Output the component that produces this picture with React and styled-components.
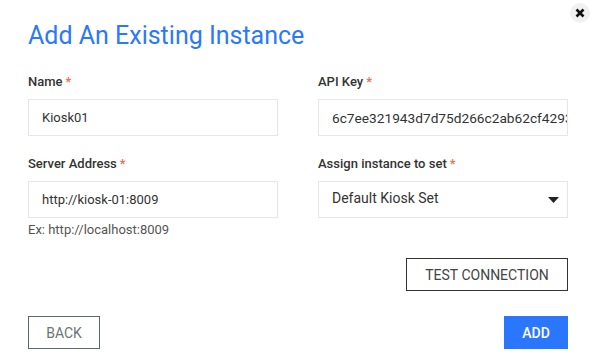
import React from "react";
import styled, { createGlobalStyle } from "styled-components";

const Global = createGlobalStyle`
  html, body { margin: 0; padding: 0; background: #fff; }
  body { font-family: Roboto, "Noto Sans", Arial, sans-serif; }
  * { box-sizing: border-box; }
`;

const Dialog = styled.div`
  position: relative;
  width: 598px;
  height: 361px;
  padding: 21px 30px 0 28px;
  background: #fff;
`;

const Close = styled.button`
  position: absolute;
  top: 3px;
  left: 570px;
  width: 20px;
  height: 20px;
  border-radius: 50%;
  border: none;
  padding: 0;
  background: #f1f1f1;
  display: flex;
  align-items: center;
  justify-content: center;
`;

const Title = styled.h1`
  margin: 0 0 24px;
  font-size: 25px;
  line-height: 29px;
  font-weight: 400;
  color: #2b78fa;
`;

const Grid = styled.div`
  display: grid;
  grid-template-columns: 250px 250px;
  column-gap: 40px;
  row-gap: 20px;
`;

const Field = styled.div`
  display: flex;
  flex-direction: column;
`;

const Label = styled.label`
  font-size: 13px;
  line-height: 16px;
  font-weight: 500;
  color: #333;
  margin-bottom: 9px;
`;

const Req = styled.span`
  color: #f06a4f;
  margin-left: 3px;
`;

const Input = styled.div`
  height: 37px;
  border: 1px solid #e6e6e6;
  padding: 0 13px;
  display: flex;
  align-items: center;
  font-size: ${(p) => p.$size || 13}px;
  color: #333;
  white-space: nowrap;
  overflow: hidden;
`;

const SelectBox = styled(Input)`
  justify-content: space-between;
  padding-bottom: 4px;
  padding-right: 8px;
`;

const Hint = styled.div`
  margin-top: 5px;
  font-size: 13px;
  line-height: 14px;
  color: #555;
`;

const TestRow = styled.div`
  display: flex;
  justify-content: flex-end;
  margin-top: 21px;
`;

const OutlineButton = styled.button`
  height: 33px;
  width: ${(p) => p.$width}px;
  padding: 0;
  background: #fff;
  border: 1px solid ${(p) => p.$border || "#333"};
  color: ${(p) => p.$color || "#444"};
  font-family: Roboto, Arial, sans-serif;
  font-size: 14px;
  text-transform: uppercase;
`;

const Footer = styled.div`
  display: flex;
  justify-content: space-between;
  margin-top: 25px;
`;

const PrimaryButton = styled.button`
  height: 33px;
  width: 64px;
  border: none;
  background: #2a76ff;
  color: #fff;
  font-family: Roboto, Arial, sans-serif;
  font-size: 14px;
  font-weight: 500;
  text-transform: uppercase;
`;

export default function App() {
  return (
    <>
      <Global />
      <Dialog>
        <Close aria-label="close">
          <svg width="10" height="10" viewBox="0 0 10 10">
            <path d="M1.5 1.5 L8.5 8.5 M8.5 1.5 L1.5 8.5" stroke="#111" strokeWidth="2.6" strokeLinecap="butt" />
          </svg>
        </Close>
        <Title>Add An Existing Instance</Title>
        <Grid>
          <Field>
            <Label>Name<Req>*</Req></Label>
            <Input>Kiosk01</Input>
          </Field>
          <Field>
            <Label>API Key<Req>*</Req></Label>
            <Input $size={13.7}>6c7ee321943d7d75d266c2ab62cf4293</Input>
          </Field>
          <Field>
            <Label>Server Address<Req>*</Req></Label>
            <Input>http://kiosk-01:8009</Input>
            <Hint>Ex: http://localhost:8009</Hint>
          </Field>
          <Field>
            <Label>Assign instance to set<Req>*</Req></Label>
            <SelectBox $size={14}>
              <span>Default Kiosk Set</span>
              <svg width="11" height="6" viewBox="0 0 11 6" style={{ marginTop: 4 }}>
                <path d="M0 0 H11 L5.5 6 Z" fill="#222" />
              </svg>
            </SelectBox>
          </Field>
        </Grid>
        <TestRow>
          <OutlineButton $width={162}>Test Connection</OutlineButton>
        </TestRow>
        <Footer>
          <OutlineButton $width={72} $border="#5b6a6a" $color="#6b7575">Back</OutlineButton>
          <PrimaryButton>Add</PrimaryButton>
        </Footer>
      </Dialog>
    </>
  );
}
